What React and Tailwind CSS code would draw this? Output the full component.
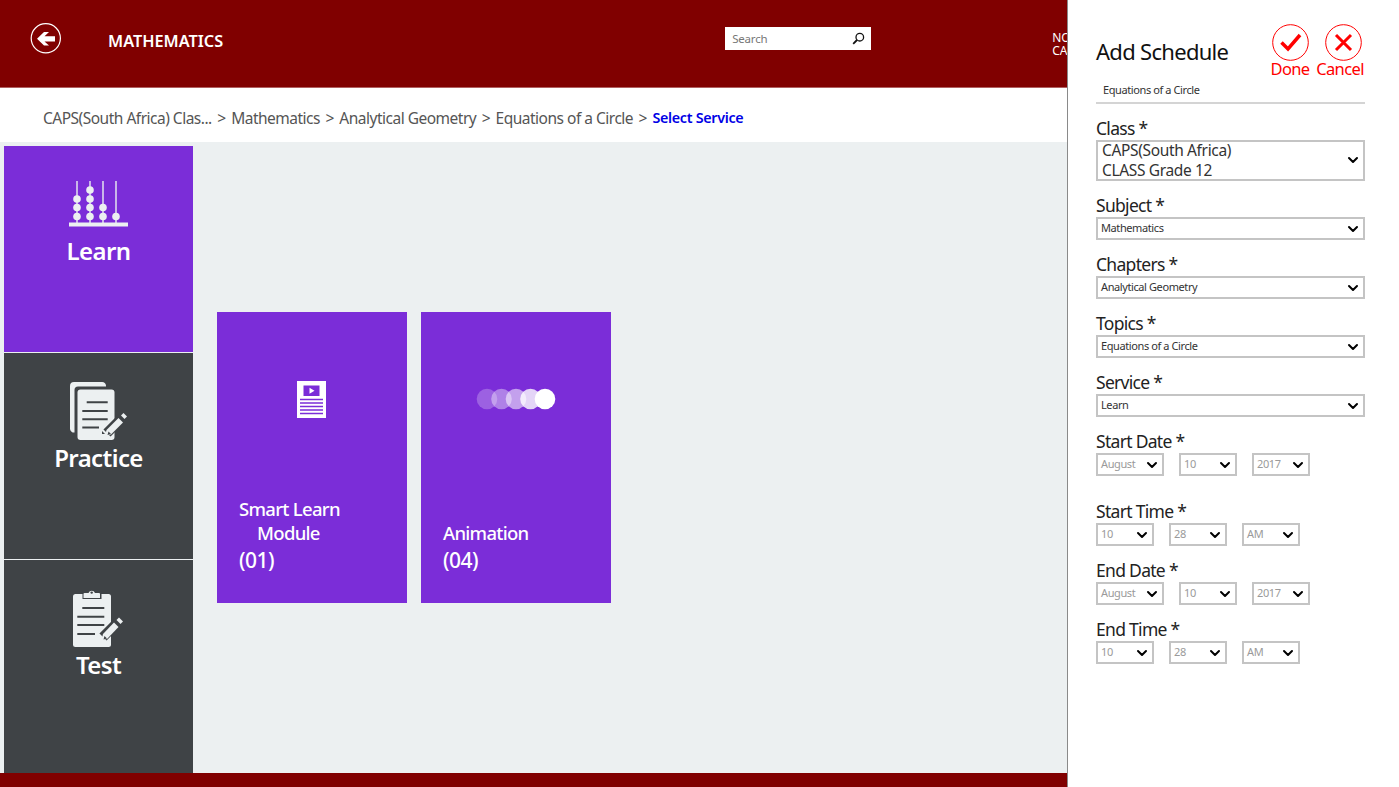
import { ChevronDown } from "lucide-react";

const font = { fontFamily: '"Noto Sans", sans-serif' };

function Abacus() {
  const beads = [
    [77, [216.5, 207.5, 199]],
    [90, [216.5, 207.5, 199, 190]],
    [103, [216.5, 207.5]],
    [116, [216.5]],
  ];
  return (
    <svg width="60" height="46" viewBox="69 181 60 46" className="block">
      {beads.map(([x, ys]) => (
        <g key={x} fill="#ecf0f1">
          <rect x={x - 0.7} y="181" width="1.4" height="42" />
          {ys.map((y) => (
            <circle key={y} cx={x} cy={y} r="3.8" />
          ))}
        </g>
      ))}
      <rect x="69" y="222.5" width="59" height="4" fill="#ecf0f1" />
    </svg>
  );
}

function PracticeIcon() {
  return (
    <svg width="58" height="60" viewBox="0 0 58 60" className="block">
      <path d="M0 4a4 4 0 0 1 4-4h28a4 4 0 0 1 4 4.500H8a3.500 3.500 0 0 0-3.500 3.500v42.500A4 4 0 0 1 0 47z" fill="#ecf0f1" />
      <rect x="7.500" y="7.500" width="37" height="50.500" rx="3" fill="#ecf0f1" />
      <path d="M12.300 29h25.400M12.300 37.300h25.400M12.300 45.600H29M16.700 20.300h21" stroke="#3f4346" strokeWidth="2" />
      <path d="M37 51 52 36" stroke="#3f4346" strokeWidth="10" />
      <path d="M32 49v3h3z" fill="#3f4346" />
      <path d="M35 54l1.500-6L48.500 36l4.500 4.500L41 52.500z" fill="#ecf0f1" />
      <path d="M38.500 49.500l2.500 2.500-3.500 1z" fill="#3f4346" />
      <path d="M51 33.500l2.500-2.500 3.500 3.500-2.500 2.500z" fill="#ecf0f1" />
    </svg>
  );
}

function TestIcon() {
  return (
    <svg width="52" height="60" viewBox="0 0 52 60" className="block">
      <rect x="0" y="5" width="38" height="53" rx="2.500" fill="#ecf0f1" />
      <path d="M9.500 2h19v8h-19z" fill="#3f4346" />
      <path d="M11.500 4h4a3.500 3.500 0 0 1 6.500 0h4a1 1 0 0 1 1 1v4H10.500V5a1 1 0 0 1 1-1z" fill="#ecf0f1" />
      <circle cx="18.700" cy="3.600" r="1.200" fill="#3f4346" />
      <path d="M9.300 19h22M4.300 27.700h27M4.300 36h27M4.300 45H22" stroke="#3f4346" strokeWidth="2" />
      <path d="M30 48 45 33" stroke="#3f4346" strokeWidth="10" />
      <path d="M28.500 51l1.500-6 11-11.500 4.500 4.500L34 50z" fill="#ecf0f1" />
      <path d="M31.500 47l2.500 2.500-3.500 1z" fill="#3f4346" />
      <path d="M43.500 31l2.500-2.500 4 4-2.500 2.500z" fill="#ecf0f1" />
    </svg>
  );
}

function VideoDoc() {
  return (
    <svg width="29" height="37" viewBox="0 0 29 37" className="block">
      <rect width="29" height="37" fill="#fff" />
      <rect x="6.500" y="4.500" width="16" height="10.500" fill="#7b2dd8" />
      <path d="M12.500 6.800v6l5-3z" fill="#fff" />
      <path d="M3 18.500h23M3 22h23M3 25.500h23M3 29h23M3 32.500h23" stroke="#7b2dd8" strokeWidth="1.300" />
    </svg>
  );
}

function Dots() {
  return (
    <svg width="80" height="22" viewBox="0 0 80 22" className="block">
      <circle cx="11" cy="11" r="10.300" fill="#fff" opacity="0.25" />
      <circle cx="25.500" cy="11" r="10.300" fill="#fff" opacity="0.4" />
      <circle cx="40" cy="11" r="10.300" fill="#fff" opacity="0.55" />
      <circle cx="54.500" cy="11" r="10.300" fill="#fff" opacity="0.8" />
      <circle cx="69" cy="11" r="10.300" fill="#fff" />
    </svg>
  );
}

function SideTile({ icon, label, active, className, labelClass }) {
  return (
    <div className={`flex flex-col items-center ${active ? "bg-[#7b2dd8]" : "bg-[#3f4346]"} ${className}`}>
      {icon}
      <span className={`text-[24px] leading-[34px] font-semibold text-white tracking-[-0.6px] ${labelClass}`}>{label}</span>
    </div>
  );
}

function Card({ icon, iconPad, titleLines, count }) {
  return (
    <div className="w-[190px] h-[291px] bg-[#7b2dd8] flex flex-col">
      <div className={`flex justify-center ${iconPad}`}>{icon}</div>
      <div className="mt-auto pl-[22px] pb-[28px] text-white text-[18.500px] font-medium tracking-[-0.7px]">
        {titleLines.map((line, i) => (
          <div key={i} className={`leading-[24px] ${i === 1 ? "pl-[18px]" : ""}`}>
            {line}
          </div>
        ))}
        <div className="text-[21px] leading-[30px] tracking-[-0.5px]">{count}</div>
      </div>
    </div>
  );
}

function Select({ value, width, muted }) {
  return (
    <div className={`h-[23px] border-2 border-[#c4c4c4] bg-white flex items-center justify-between pl-[3px] pr-[2px] ${width}`}>
      <span className={`text-[11px] tracking-[-0.4px] whitespace-nowrap ${muted ? "text-[#9a9a9a]" : "text-[#333]"}`}>{value}</span>
      <ChevronDown size={16} strokeWidth={3} className="text-black shrink-0" />
    </div>
  );
}

function Label({ children }) {
  return <div className="text-[17.500px] leading-[23px] text-[#222] tracking-[-0.7px]">{children}</div>;
}

function Field({ label, value }) {
  return (
    <div className="mb-[13px]">
      <Label>{label} *</Label>
      <Select value={value} width="w-full" />
    </div>
  );
}

function DateRow({ label, values, className, time }) {
  const widths = time ? ["w-[58px]", "w-[58px]", "w-[58px]"] : ["w-[68px]", "w-[58px]", "w-[58px]"];
  return (
    <div className={className}>
      <Label>{label} *</Label>
      <div className="flex gap-[15px]">
        {values.map((v, i) => (
          <Select key={i} value={v} width={widths[i]} muted />
        ))}
      </div>
    </div>
  );
}

export default function App() {
  const crumbs = ["CAPS(South Africa) Clas...", "Mathematics", "Analytical Geometry", "Equations of a Circle"];

  return (
    <div className="w-[1399px] h-[787px] flex overflow-hidden bg-white" style={font}>
      <div className="w-[1067px] h-full flex flex-col shrink-0 overflow-hidden">
        <header className="h-[88px] bg-[#800000] flex items-start text-white shrink-0 border-b border-[#b06060]">
          <button className="ml-[30px] mt-[23px] w-[32px] h-[32px] shrink-0">
            <svg width="32" height="32" viewBox="0 0 32 32" className="block">
              <circle cx="15.800" cy="15.300" r="14.600" fill="none" stroke="#fff" strokeWidth="1.200" />
              <path d="M7 15.800 14 9h5l-4.500 4.200H25v5.200H14.500L19 22.600h-5z" fill="#fff" />
            </svg>
          </button>
          <h1 className="ml-[46px] mt-[30px] text-[16.300px] leading-[23px] font-semibold shrink-0">MATHEMATICS</h1>
          <div className="ml-[502px] mt-[27px] w-[146px] h-[23px] bg-white flex items-center justify-between pl-[7px] pr-[6px] shrink-0">
            <span className="text-[11.500px] text-[#777] tracking-[-0.2px]">Search</span>
            <svg width="13" height="13" viewBox="0 0 13 13" className="block">
              <circle cx="7.800" cy="5.200" r="3.800" fill="none" stroke="#111" strokeWidth="1.300" />
              <path d="M5 8 1.200 11.800" stroke="#111" strokeWidth="1.800" />
            </svg>
          </div>
          <div className="ml-[181px] mt-[31px] text-[12px] leading-[13px] whitespace-nowrap shrink-0">
            <div>NO</div>
            <div>CA</div>
          </div>
        </header>

        <nav className="h-[54px] shrink-0 bg-white flex items-center pl-[43px] pt-[8px] text-[15.500px] text-[#555] tracking-[-0.5px] whitespace-nowrap">
          {crumbs.map((c) => (
            <span key={c} className="flex">
              <span>{c}</span>
              <span className="mx-[5.500px]">&gt;</span>
            </span>
          ))}
          <span className="-mt-[2px] text-[#0000e6] font-semibold text-[14.300px] tracking-[-0.3px]">Select Service</span>
        </nav>

        <main className="flex-1 min-h-0 bg-[#ecf0f1] flex pt-[4px] pl-[4px]">
          <div className="w-[189px] flex flex-col gap-[1px]">
            <SideTile active label="Learn" icon={<Abacus />} className="h-[206px] pt-[35px]" labelClass="mt-[7px]" />
            <SideTile label="Practice" icon={<PracticeIcon />} className="h-[206px] pt-[29px]" labelClass="-mt-[1px]" />
            <SideTile label="Test" icon={<TestIcon />} className="flex-1 pt-[29px]" labelClass="-mt-[1px]" />
          </div>
          <div className="flex gap-[14px] ml-[24px] mt-[166px] items-start">
            <Card icon={<VideoDoc />} iconPad="pt-[69px] pr-[1px]" titleLines={["Smart Learn", "Module"]} count="(01)" />
            <Card icon={<Dots />} iconPad="pt-[76px]" titleLines={["Animation"]} count="(04)" />
          </div>
        </main>

        <footer className="h-[14px] shrink-0 bg-[#800000]" />
      </div>

      <aside className="w-[332px] h-full border-l border-[#8a8a8a] bg-white pl-[28px] pr-[34px] shrink-0">
        <div className="flex justify-between h-[79px] items-start">
          <h2 className="mt-[36px] text-[22px] leading-[30px] text-[#111] tracking-[-0.7px]">Add Schedule</h2>
          <div className="flex gap-[8px] mt-[24px] pr-[2px] text-[#ff0000] text-[16.500px] leading-[20px] tracking-[-0.6px]">
            <div className="flex flex-col items-center w-[38px]">
              <svg width="37" height="37" viewBox="0 0 37 37" className="block shrink-0">
                <circle cx="18.500" cy="18.500" r="17.800" fill="none" stroke="#ff0000" strokeWidth="1" />
                <path d="M9.500 18.500 16 25 28 11" fill="none" stroke="#ff0000" strokeWidth="3.500" />
              </svg>
              <span className="-mt-[2px]">Done</span>
            </div>
            <div className="flex flex-col items-center w-[46px]">
              <svg width="37" height="37" viewBox="0 0 37 37" className="block shrink-0 ml-[6px]">
                <circle cx="18.500" cy="18.500" r="17.800" fill="none" stroke="#ff0000" strokeWidth="1" />
                <path d="M11 11l15 15M26 11 11 26" fill="none" stroke="#ff0000" strokeWidth="3" />
              </svg>
              <span className="-mt-[2px]">Cancel</span>
            </div>
          </div>
        </div>
        <div className="h-[25px] pl-[7px] pt-[2px] border-b-2 border-[#d4d4d4] text-[11px] leading-[18px] text-[#333] tracking-[-0.4px]">
          Equations of a Circle
        </div>

        <div className="mt-[13px]">
          <Label>Class *</Label>
          <div className="h-[41px] border-2 border-[#c4c4c4] flex items-center justify-between pl-[4px] pr-[2px] pb-[1px] mb-[13px]">
            <div className="text-[15.500px] leading-[20px] text-[#333] tracking-[-0.35px]">
              <div>CAPS(South Africa)</div>
              <div>CLASS Grade 12</div>
            </div>
            <ChevronDown size={16} strokeWidth={3} className="text-black shrink-0" />
          </div>
          <Field label="Subject" value="Mathematics" />
          <Field label="Chapters" value="Analytical Geometry" />
          <Field label="Topics" value="Equations of a Circle" />
          <Field label="Service" value="Learn" />
          <DateRow label="Start Date" values={["August", "10", "2017"]} className="mb-[24px]" />
          <DateRow label="Start Time" values={["10", "28", "AM"]} className="mb-[13px]" time />
          <DateRow label="End Date" values={["August", "10", "2017"]} className="mb-[13px]" />
          <DateRow label="End Time" values={["10", "28", "AM"]} time />
        </div>
      </aside>
    </div>
  );
}
